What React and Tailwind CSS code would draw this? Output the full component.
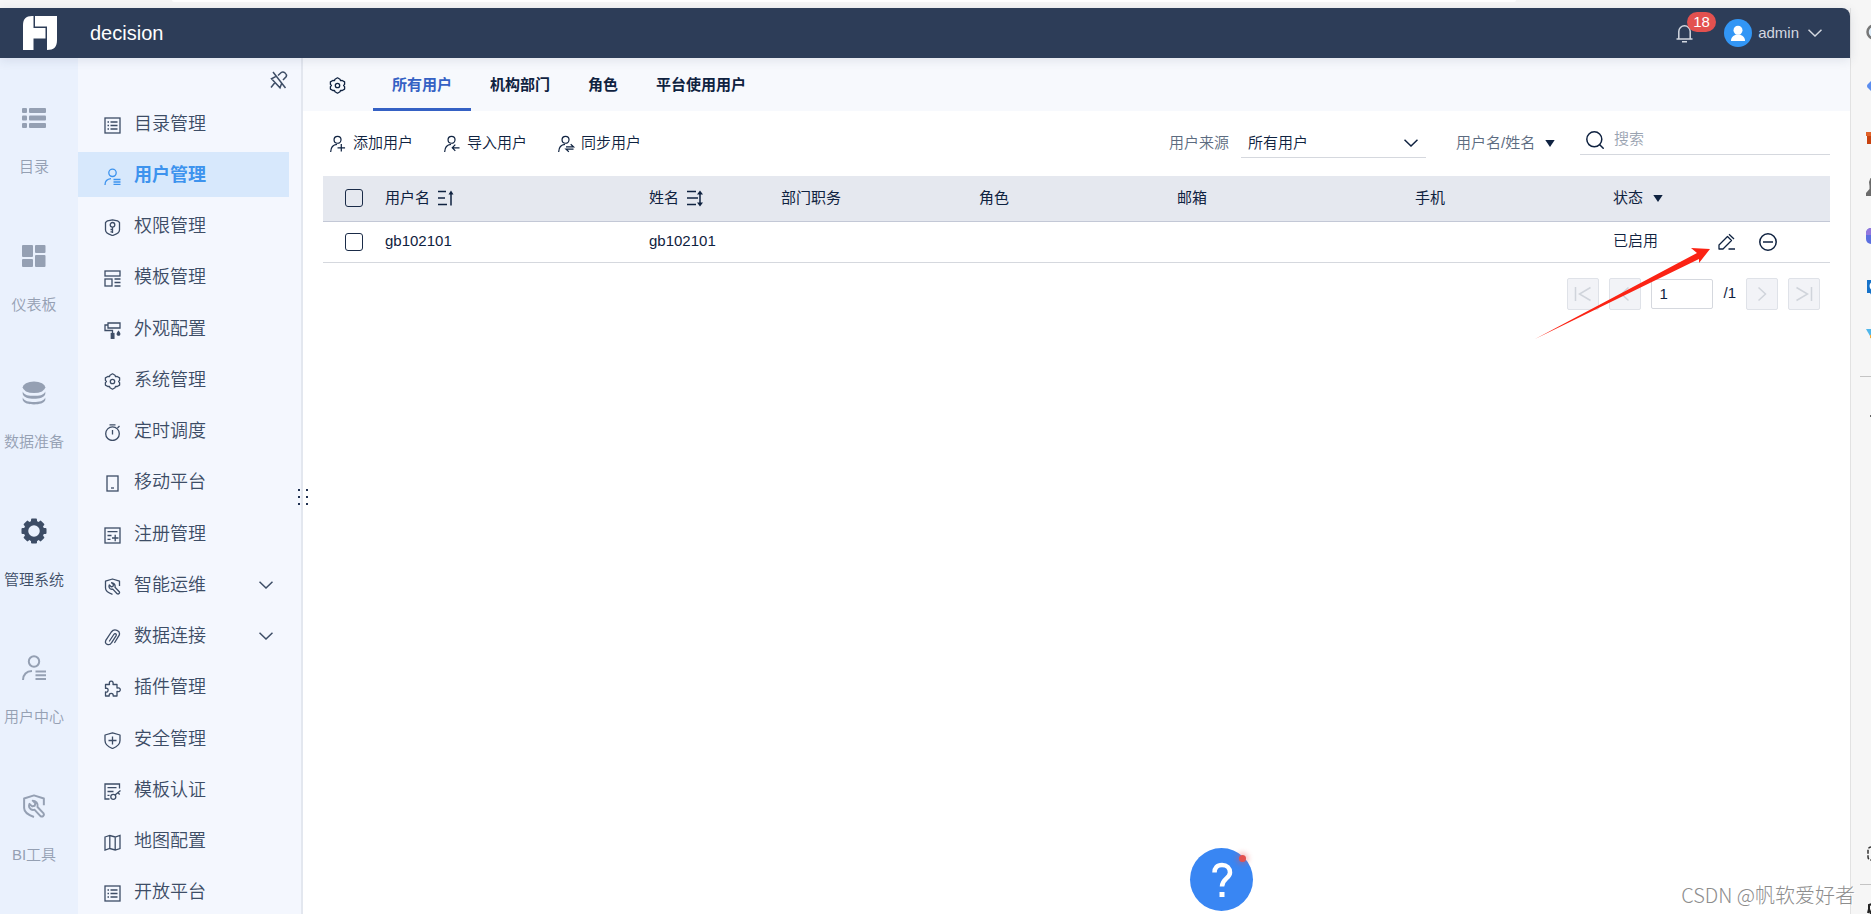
import React, { useState } from "react";

const Icon = ({ children, className = "h-[17px] w-[17px]", box = 17, width = 1.3 }) => (
  <svg
    aria-hidden="true"
    viewBox={`0 0 ${box} ${box}`}
    fill="none"
    stroke="currentColor"
    strokeWidth={width}
    className={`shrink-0 ${className}`}
  >
    {children}
  </svg>
);

// shared shapes
const listShape = (
  <>
    <rect x="1" y="1" width="15" height="15" />
    <path d="M3.5 5h1.5M6.5 5h7M3.5 8.5h1.5M6.5 8.5h7M3.5 12h1.5M6.5 12h7" />
  </>
);

const gearShape = (
  <>
    <path
      d="M8.500.8 11 2.200 11.600 3.700 13.200 3.500 15.600 4.900V7.300L14.600 8.500 15.600 9.700V12.100L13.200 13.500 11.600 13.300 11 14.800 8.500 16.200 6 14.800 5.400 13.300 3.800 13.500 1.400 12.100V9.700L2.400 8.500 1.400 7.300V4.900L3.800 3.500 5.400 3.700 6 2.200z"
      strokeLinejoin="round"
    />
    <circle cx="8.5" cy="8.5" r="2.2" />
  </>
);

const userListShape = (
  <>
    <circle cx="8.5" cy="4.8" r="3.7" />
    <path d="M1 17c0-3.8 2.300-6 6-6.300M9.500 11.500h7M9.500 14h7M9.500 16.400h7" />
  </>
);

const wrenchShape = (
  <>
    <path d="M15.500 8V3.200L8.500 1 1.500 3.200V10c0 3 3 5 7 6.300" strokeLinejoin="round" />
    <path
      d="M7.600 4.700 9.500 6.600 9 8.300 7.200 8.800 5.300 7c-.6 1.600-.2 2.900.9 3.700.9.600 1.800.7 2.600.4l4.300 4.600c1.500.9 3-.6 2.200-2L11 9.200c.3-1 .1-2.200-.7-3.200-.8-.9-1.700-1.300-2.700-1.300z"
      strokeLinejoin="round"
    />
  </>
);

const menu = [
  { label: "目录管理", icon: listShape },
  { label: "用户管理", icon: userListShape },
  {
    label: "权限管理",
    icon: (
      <>
        <path d="M8.500.8 13.500 1.800 15.500 3.500v7.500c0 3-3.500 4.500-7 5.500-3.500-1-7-2.500-7-5.500V3.500L3.500 1.800z" strokeLinejoin="round" />
        <circle cx="8.5" cy="5.8" r="2.3" />
        <path d="M8.500 8v6M6.500 10.500h2M6.500 12.800h2" />
      </>
    ),
  },
  {
    label: "模板管理",
    icon: (
      <>
        <rect x="1" y="1" width="15" height="5" />
        <rect x="1" y="9" width="7" height="7" />
        <path d="M10.500 9H16.500M10.500 12.500h6M10.500 16h6" />
      </>
    ),
  },
  {
    label: "外观配置",
    icon: (
      <>
        <path d="M4 1h12v5H4zM4 3H1v5.500h7.500v3" />
        <rect x="7.3" y="11.5" width="2.6" height="4.8" fill="currentColor" />
        <path d="M14.500 9.500c1 1.400 1.300 1.700 1.300 2.400a1.300 1.300 0 0 1-2.600 0c0-.7.3-1 1.300-2.400z" fill="currentColor" />
      </>
    ),
  },
  { label: "系统管理", icon: gearShape },
  {
    label: "定时调度",
    icon: (
      <>
        <circle cx="8.5" cy="9.7" r="6.8" />
        <path d="M5.500 .8h6M8.500 6v4.500M13.500 4l2-2" />
      </>
    ),
  },
  {
    label: "移动平台",
    icon: (
      <>
        <rect x="3" y="1" width="11" height="15" />
        <path d="M7 13h3" />
      </>
    ),
  },
  {
    label: "注册管理",
    icon: (
      <>
        <rect x="1" y="1" width="15" height="15" />
        <path d="M3.500 4.700h10M3.500 8.500h4M3.500 12.300h3M8 11h6.500M11.200 7.800v6.500" />
      </>
    ),
  },
  { label: "智能运维", icon: wrenchShape, expandable: true },
  {
    label: "数据连接",
    expandable: true,
    icon: (
      <path
        d="M5.500 12 9.800 5.500c1.200-1.700 3.200-.5 2.200 1.300L7.500 13.800c-2 3.500-7.500 1.500-5.700-2.400L7.300 3c3-4 9.500-1.500 7.900 3.200l-4.500 7.300"
        strokeLinecap="round"
      />
    ),
  },
  {
    label: "插件管理",
    icon: (
      <path
        d="M1.500 4.500h4C5 2.500 5.500 1.200 7.200 1.200S9.500 2.500 9 4.500h4V8c2-.5 3.300.2 3.300 1.800S15 12 13 11.500V16H9.200c.2-1.800-.6-2.600-2-2.600s-2.200.8-2 2.600H1.500v-4c1.800.3 2.600-.6 2.600-1.900S3.300 8 1.500 8.300z"
        strokeLinejoin="round"
      />
    ),
  },
  {
    label: "安全管理",
    icon: (
      <>
        <path d="M8.500.8 16 3v5.500c0 4-3.500 6.500-7.500 8-4-1.500-7.500-4-7.500-8V3z" strokeLinejoin="round" />
        <path d="M4.500 8.500h8M8.500 4.500v8" />
      </>
    ),
  },
  {
    label: "模板认证",
    icon: (
      <>
        <path d="M15.500 5.500V1H1v15h4.500M3.500 4.700h9M3.500 8.500h6M3.500 12.300h2" />
        <circle cx="9.3" cy="13.8" r="2.5" />
        <path d="m11 12 5.500-4.500M14 9.700l1.700 1.800" />
      </>
    ),
  },
  {
    label: "地图配置",
    icon: <path d="m1 3 4.800-1.500 5.400 1.500L16 1.500v13L11.200 16l-5.400-1.500L1 16zM5.800 1.500v13M11.200 3v13" />,
  },
  { label: "开放平台", icon: listShape },
];

const modules = [
  {
    label: "目录",
    icon: (
      <g fill="currentColor" stroke="none">
        <rect x="0" y="2" width="5" height="5" rx="1" />
        <rect x="0" y="9.5" width="5" height="5" rx="1" />
        <rect x="0" y="17" width="5" height="5" rx="1" />
        <rect x="7" y="2" width="17" height="5" rx="1" />
        <rect x="7" y="9.5" width="17" height="5" rx="1" />
        <rect x="7" y="17" width="17" height="5" rx="1" />
      </g>
    ),
  },
  {
    label: "仪表板",
    icon: (
      <g fill="currentColor" stroke="none">
        <rect x="0" y="1" width="11" height="12" rx="1" />
        <rect x="13" y="1" width="10.5" height="8" rx="1" />
        <rect x="0" y="15" width="11" height="8" rx="1" />
        <rect x="13" y="11" width="10.5" height="12" rx="1" />
      </g>
    ),
  },
  {
    label: "数据准备",
    icon: (
      <g fill="currentColor" stroke="none">
        <ellipse cx="12" cy="6.3" rx="11.3" ry="5.8" />
        <path d="M.7 10.500c1.500 4 6.300 4.300 11.300 4.300s9.800-.3 11.300-4.300v2.500c-1 3.500-5.800 4.700-11.300 4.700S1.700 16.500.7 13z" />
        <path d="M.7 16.500c1.500 3.700 6.300 4.500 11.300 4.500s9.800-.8 11.300-4.500v2.600c-1 3.200-5.800 4.400-11.300 4.400S1.700 22.300.7 19.100z" />
      </g>
    ),
  },
  {
    label: "管理系统",
    active: true,
    icon: (
      <>
        <circle cx="12" cy="12" r="8" strokeWidth="4.5" />
        <g fill="currentColor" stroke="none">
          <rect x="9" y="-.5" width="6" height="5" rx="1" />
          <rect x="9" y="19.5" width="6" height="5" rx="1" />
          <rect x="-.5" y="9" width="5" height="6" rx="1" />
          <rect x="19.5" y="9" width="5" height="6" rx="1" />
          <g transform="rotate(45 12 12)">
            <rect x="9" y="-.2" width="6" height="5" rx="1" />
            <rect x="9" y="19.2" width="6" height="5" rx="1" />
            <rect x="-.2" y="9" width="5" height="6" rx="1" />
            <rect x="19.2" y="9" width="5" height="6" rx="1" />
          </g>
        </g>
      </>
    ),
  },
  {
    label: "用户中心",
    icon: (
      <>
        <circle cx="12" cy="5.5" r="5.2" />
        <path d="M1 24c.3-5.500 3.500-8.800 9-9M13.500 15.500h10.500M13.500 19.300h10.500M13.500 23h10.500" />
      </>
    ),
  },
  {
    label: "BI工具",
    icon: (
      <g transform="scale(1.41)" strokeWidth="1.4">
        {wrenchShape}
      </g>
    ),
  },
];

const tabs = ["所有用户", "机构部门", "角色", "平台使用用户"];

const userActions = [
  { label: "添加用户", mark: "M8 12.500h8M12 8.500v8" },
  { label: "导入用户", mark: "M16.500 12.500H9M12 9.200 8.800 12.500l3.200 3.300" },
  { label: "同步用户", mark: "M8.500 11.500H16.500l-3-2.700M16.500 14H8.500l3 2.700" },
];

const users = [{ username: "gb102101", name: "gb102101", status: "已启用" }];

const ChevronDown = ({ className }) => (
  <svg aria-hidden="true" viewBox="0 0 14 8" fill="none" stroke="currentColor" strokeWidth="1.5" className={className}>
    <path d="m.5.7 6.500 6.300L13.500.7" />
  </svg>
);

const Triangle = () => (
  <svg aria-hidden="true" viewBox="0 0 10 7" fill="currentColor" className="pointer-events-none h-[7px] w-[10px] shrink-0">
    <path d="M.3 0h9.400L5 7z" />
  </svg>
);

const Header = () => (
  <header className="relative z-10 flex h-[50px] shrink-0 items-center rounded-tr-lg bg-[#2d3d58] pr-7 pl-[22px] text-white shadow-[0_2px_12px_rgba(45,61,88,0.12)]">
    <svg aria-hidden="true" viewBox="0 0 36 36" fill="#fff" className="h-9 w-9">
      <path d="M11.500 1v12h12v10.500h-12V35H1V10c0-6 3-9 9-9z" />
      <path d="M13 1h22v24c0 7-3 10-10 10V11.500H13z" />
    </svg>
    <h1 className="ml-8 text-xl">decision</h1>

    <div className="ml-auto flex items-center text-[#d3d8e0]">
      <button aria-label="消息" className="relative mr-[31px]">
        <svg aria-hidden="true" viewBox="0 0 17 19" fill="none" stroke="currentColor" strokeWidth="1.5" className="h-[19px] w-[17px]">
          <path d="M2.800 15V7.500a5.700 5.700 0 0 1 11.400 0V15M.5 15h16M6 17.800h5" />
        </svg>
        <span className="absolute -top-3 left-[11px] rounded-full bg-[#e3514f] px-[6px] text-[15px] leading-5 text-white">18</span>
      </button>
      <button className="flex items-center">
        <svg aria-hidden="true" viewBox="0 0 28 28" className="h-7 w-7">
          <circle cx="14" cy="14" r="14" fill="#3296f5" />
          <circle cx="14" cy="11.3" r="4.5" fill="#fff" />
          <path d="M7 22c0-4 2.500-5.500 5-6.500h4c2.500 1 5 2.500 5 6.500z" fill="#fff" />
        </svg>
        <span className="ml-[6px] text-[15px]">admin</span>
        <ChevronDown className="ml-[9px] h-2 w-[14px]" />
      </button>
    </div>
  </header>
);

const ModuleRail = () => (
  <nav className="flex w-[78px] shrink-0 flex-col bg-[#eaf1fd] pt-[31px] pr-[10px]">
    {modules.map(({ label, icon, active }) => (
      <button
        key={label}
        className={`flex flex-1 flex-col items-center pt-[17px] text-[15px] ${active ? "text-[#3d4d66]" : "text-[#95a0b3]"}`}
      >
        <Icon box={24} width={2} className="h-6 w-6 overflow-visible">
          {icon}
        </Icon>
        <span className="mt-[26px] leading-[22px] whitespace-nowrap">{label}</span>
      </button>
    ))}
  </nav>
);

const Sidebar = () => {
  const [current, setCurrent] = useState("用户管理");

  return (
    <aside className="relative flex w-[225px] shrink-0 flex-col border-r-2 border-[#e3e7ef] bg-[#f4f7fe] text-[#3d4d66]">
      <div className="flex h-[43px] items-center justify-end pr-3">
        <button aria-label="取消固定">
          <Icon box={20} width={1.5} className="h-5 w-5">
            <path d="m4 2 12.500 16M9 5.500 12.500 2.300c2.200-1.300 5.800 1.700 4.800 4.200L14 10M7 6.300 2.500 8.800l8.500 9 1.500-4M6 12.500 2 17.500" />
          </Icon>
        </button>
      </div>
      <ul className="-mb-px flex flex-1 flex-col justify-between">
        {menu.map(({ label, icon, expandable }) => (
          <li key={label}>
            <button
              onClick={() => setCurrent(label)}
              className={`flex h-[45px] w-[211px] items-center pr-4 pl-[26px] text-lg ${
                current === label ? "bg-[#d7e8fc] font-bold text-[#3d93ee]" : "font-[350]"
              }`}
            >
              <Icon className="mt-[3px] h-[17px] w-[17px]">{icon}</Icon>
              <span className="ml-[13px] leading-6">{label}</span>
              {expandable && <ChevronDown className="ml-auto h-2 w-[14px]" />}
            </button>
          </li>
        ))}
      </ul>
      {/* resize handle, straddles the border */}
      <div className="absolute top-[431px] -right-[7px] z-10 grid cursor-col-resize grid-cols-2 gap-x-[6px] gap-y-[5px]">
        {[0, 1, 2, 3, 4, 5].map((dot) => (
          <i key={dot} className="h-[2px] w-[2px] bg-[#1f3050]" />
        ))}
      </div>
    </aside>
  );
};

const Tabs = () => {
  const [current, setCurrent] = useState(tabs[0]);

  return (
    <div className="flex h-[53px] shrink-0 items-stretch bg-[#f7f9fd] pl-[26px]">
      <button aria-label="设置" className="mr-[27px] pt-[2px]">
        <Icon>{gearShape}</Icon>
      </button>
      {tabs.map((tab) => (
        <button
          key={tab}
          onClick={() => setCurrent(tab)}
          className={`border-b-3 px-[19px] pt-[5px] text-[15px] font-bold ${
            current === tab ? "border-[#3561c4] text-[#3561c4]" : "border-transparent"
          }`}
        >
          {tab}
        </button>
      ))}
    </div>
  );
};

const Toolbar = () => (
  <div className="flex h-[65px] shrink-0 items-center pr-5 pl-[27px]">
    <div className="flex gap-[31px]">
      {userActions.map(({ label, mark }) => (
        <button key={label} className="flex items-center gap-[7px]">
          <Icon className="h-4 w-4 overflow-visible">
            <circle cx="8" cy="4" r="3.7" />
            <path d="M.7 17C.9 12.500 3 9.300 7.500 9" />
            <path d={mark} />
          </Icon>
          {label}
        </button>
      ))}
    </div>

    <div className="ml-auto flex items-center">
      <label htmlFor="source" className="text-[#5c6b80]">
        用户来源
      </label>
      <div className="ml-3 flex h-7 w-[185px] items-center border-b border-[#d5d8de]">
        <select id="source" className="w-full appearance-none bg-transparent pl-[7px] outline-none">
          <option>所有用户</option>
        </select>
        <ChevronDown className="pointer-events-none mr-2 -ml-[22px] h-2 w-[14px] shrink-0" />
      </div>
      <div className="ml-[30px] flex items-center gap-[9px]">
        <select aria-label="搜索字段" className="appearance-none bg-transparent text-[#5c6b80] outline-none">
          <option>用户名/姓名</option>
        </select>
        <Triangle />
      </div>
      <div className="mb-[7px] ml-[25px] flex h-[30px] w-[250px] items-center border-b border-[#d5d8de] pl-[6px]">
        <svg aria-hidden="true" viewBox="0 0 18 18" fill="none" stroke="currentColor" strokeWidth="1.5" className="h-[18px] w-[18px] shrink-0">
          <circle cx="8.3" cy="8.3" r="7.5" />
          <path d="m13.700 13.700 4 4" />
        </svg>
        <input aria-label="搜索" placeholder="搜索" className="ml-[10px] w-full bg-transparent outline-none placeholder:text-[#9aa3b1]" />
      </div>
    </div>
  </div>
);

const Checkbox = ({ label }) => (
  <input
    type="checkbox"
    aria-label={label}
    className="block h-[18px] w-[18px] appearance-none rounded-[3px] border border-[#1a2b48] bg-transparent checked:bg-[#3561c4]"
  />
);

const UserTable = () => (
  <table className="w-full table-fixed text-left">
    <thead className="bg-[#e5e8ef]">
      <tr className="h-[45px] border-b border-[#c3c8d6] *:font-normal">
        <th className="w-[62px] pl-[22px]">
          <Checkbox label="全选" />
        </th>
        <th className="w-[264px]">
          <button className="flex items-center gap-[7px]">
            用户名
            <Icon width={1.5} className="h-[17px] w-[17px]">
              <path d="M1 1.500h8M1 8h7M1 14.500h9M14 15.500V3" />
              <path d="m14 .5 2.500 4h-5z" fill="currentColor" stroke="none" />
            </Icon>
          </button>
        </th>
        <th className="w-[132px]">
          <button className="flex items-center gap-[7px]">
            姓名
            <Icon width={1.5} className="h-[17px] w-[17px]">
              <path d="M1 1.500h9M1 8h11M1 14.500h9M14 13V4" />
              <path d="m14 .5 3 4h-6zM14 16.500l3-4h-6z" fill="currentColor" stroke="none" />
            </Icon>
          </button>
        </th>
        <th className="w-[198px]">部门职务</th>
        <th className="w-[198px]">角色</th>
        <th className="w-[238px]">邮箱</th>
        <th className="w-[198px]">手机</th>
        <th className="w-[100px]">
          <button className="flex items-center gap-[10px]">
            状态
            <Triangle />
          </button>
        </th>
        <th className="w-[117px]" aria-label="操作" />
      </tr>
    </thead>
    <tbody>
      {users.map((user) => (
        <tr key={user.username} className="h-[41px] border-b border-[#d5d8de]">
          <td className="pl-[22px]">
            <Checkbox label={user.username} />
          </td>
          <td>{user.username}</td>
          <td>{user.name}</td>
          <td />
          <td />
          <td />
          <td />
          <td>{user.status}</td>
          <td>
            <div className="flex items-center gap-6 pl-[5px]">
              <button aria-label="编辑">
                <Icon className="h-[17px] w-[17px]">
                  <path d="M1 16v-4L9.500 3.500l4 4L5 16zM10.500 16H17" strokeLinejoin="round" />
                  <path d="M11 1.200 16 6" />
                </Icon>
              </button>
              <button aria-label="禁用">
                <Icon box={18} width={1.5} className="h-[18px] w-[18px]">
                  <circle cx="9" cy="9" r="8.2" />
                  <path d="M4 9h10" />
                </Icon>
              </button>
            </div>
          </td>
        </tr>
      ))}
    </tbody>
  </table>
);

const PageButton = ({ label, d }) => (
  <button
    aria-label={label}
    disabled
    className="flex h-8 w-8 items-center justify-center rounded-[2px] border border-[#dfe2e8] bg-[#f2f3f7] text-[#d0d4db]"
  >
    <svg aria-hidden="true" viewBox="0 0 18 16" fill="none" stroke="currentColor" strokeWidth="1.5" className="h-4 w-[18px] shrink-0">
      <path d={d} />
    </svg>
  </button>
);

const Pagination = () => (
  <div className="mt-[15px] flex items-center justify-end gap-[10px] pr-[10px]">
    <PageButton label="首页" d="M1.500 1v14M16.500 1.500 5.500 8l11 6.500" />
    <PageButton label="上一页" d="M12.500 1.500 5.500 8l7 6.500" />
    <input
      aria-label="页码"
      defaultValue="1"
      className="h-[30px] w-[62px] rounded-[2px] border border-[#d5d8de] pl-[7px] outline-none"
    />
    <span>/1</span>
    <PageButton label="下一页" d="M5.500 1.500 12.500 8l-7 6.500" />
    <PageButton label="末页" d="M16.500 1v14M1.500 1.500 12.500 8l-11 6.500" />
  </div>
);

// browser side strip, mostly cut off by the window edge
const EdgeStrip = () => (
  <aside className="flex w-[21px] shrink-0 flex-col overflow-hidden border-l border-[#e2e2e2] bg-[#f6f6f6] pt-[15px] pl-[15px]">
    <svg viewBox="0 0 20 18" className="h-[18px] w-5 shrink-0">
      <circle cx="8" cy="9" r="6.5" fill="#dfeefa" stroke="#777" strokeWidth="2.5" />
    </svg>
    <svg viewBox="0 0 20 20" className="mt-[35px] h-5 w-5 shrink-0">
      <path d="M1.500 8.500Q.5 10 1.500 11.500L7 17V3z" fill="#5b8def" />
    </svg>
    <svg viewBox="0 0 20 14" className="mt-[35px] h-[14px] w-5 shrink-0">
      <path d="M0 1h20v4H0z" fill="#e0622a" />
      <path d="M1 5h18v8H1z" fill="#c8420f" />
    </svg>
    <svg viewBox="0 0 20 20" className="mt-[32px] h-5 w-5 shrink-0">
      <path d="M0 19v-3l3.500-4V9L3 5l1.500-4H12v18z" fill="#6b6b6b" />
    </svg>
    <svg viewBox="0 0 20 16" className="mt-[31px] h-4 w-5 shrink-0">
      <rect width="20" height="16" rx="5" fill="#5b6fe0" />
      <path d="M0 7V5a5 5 0 0 1 5-5h3v7z" fill="#9377dd" />
    </svg>
    <svg viewBox="0 0 20 18" className="mt-[35px] h-[18px] w-5 shrink-0">
      <path d="M1 1h18v13H6v3l-2-3H1z" fill="#1672c9" />
      <circle cx="8" cy="7" r="3.5" fill="none" stroke="#fff" strokeWidth="2" />
    </svg>
    <svg viewBox="0 0 20 18" className="mt-[29px] h-[18px] w-5 shrink-0">
      <path d="M0 3h8l6 4-10 3z" fill="#4fb6ea" />
      <path d="m4 9 8-3v8l-8-2z" fill="#f3ac3a" />
    </svg>
    <hr className="mt-[32px] -ml-[6px] w-5 border-[#c4c4c4]" />
    <svg viewBox="0 0 20 18" fill="none" stroke="#333" strokeWidth="1.5" className="mt-[30px] h-[18px] w-5 shrink-0">
      <path d="M4 9h16" />
    </svg>
    <svg viewBox="0 0 20 18" fill="none" stroke="#333" strokeWidth="1.5" className="mt-auto h-[18px] w-5 shrink-0">
      <rect x="2" y="2" width="16" height="13" rx="3" strokeDasharray="4 1.5" />
    </svg>
    <hr className="mt-[21px] -ml-[6px] w-5 border-[#c4c4c4]" />
    <svg viewBox="0 0 20 12" fill="none" stroke="#222" strokeWidth="2" className="mt-[17px] h-3 w-5 shrink-0">
      <path d="M6 2 3 3v4l-1 4M3 7l2 5" />
    </svg>
  </aside>
);

const App = () => (
  <div className="relative flex min-h-screen flex-col overflow-hidden bg-[#f6f6f6] font-['Liberation_Sans','Noto_Sans_CJK_SC',sans-serif] text-[15px] font-[350] text-[#0f2240]">
    <div className="h-2 shrink-0">
      <div className="mr-[355px] ml-[172px] h-[2px] rounded-b bg-white" />
    </div>

    <div className="flex flex-1">
      <div className="flex min-w-0 flex-1 flex-col">
        <Header />
        <div className="flex flex-1">
          <ModuleRail />
          <Sidebar />
          <main className="flex min-w-0 flex-1 flex-col bg-white">
            <Tabs />
            <Toolbar />
            <div className="px-5">
              <UserTable />
              <Pagination />
            </div>
          </main>
        </div>
      </div>
      <EdgeStrip />
    </div>

    {/* pointer towards the edit action */}
    <svg aria-hidden="true" viewBox="0 0 178 92" className="pointer-events-none absolute top-[247px] right-[159px] h-[92px] w-[178px]">
      <path d="M1 92 163 6l-6-5 19 1-11 14v-4z" fill="#fb2314" />
    </svg>

    <button
      aria-label="帮助"
      className="absolute right-[618px] bottom-[3px] flex h-[63px] w-[63px] items-center justify-center rounded-full bg-[#3986f3]"
    >
      <svg aria-hidden="true" viewBox="0 0 22 36" fill="none" stroke="#fff" strokeWidth="4.5" className="h-9 w-[22px]">
        <path d="M3.500 10.500C3.500 6 6 3 11 3s8 3 8 7.500c0 6-8 6-8 14" strokeLinejoin="round" />
        <path d="M11 30v5" strokeWidth="5" />
      </svg>
      <span className="absolute top-[7px] right-[7px] h-[7px] w-[7px] rounded-full bg-[#e3514f] shadow-[0_0_5px_3px_rgba(227,81,79,0.3)]" />
    </button>

    <p className="pointer-events-none absolute right-4 bottom-[5px] font-['Noto_Sans_CJK_SC',sans-serif] text-xl font-light text-[#8d8d8d] [text-shadow:1px_1px_0_#fff]">
      CSDN @帆软爱好者
    </p>
  </div>
);

export default App;
